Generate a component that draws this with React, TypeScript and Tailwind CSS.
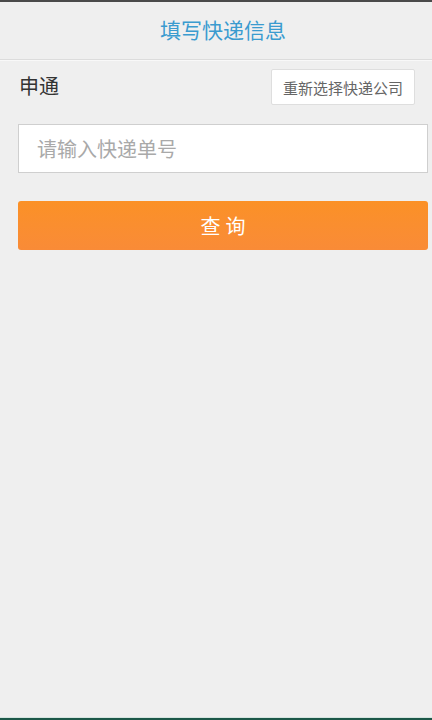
const FONT = { fontFamily: '"Noto Sans CJK SC", "Noto Sans", sans-serif' };

export default function App() {
  return (
    <div className="flex flex-col w-[432px] h-[720px] bg-[#efefef] text-[#333]" style={FONT}>
      <div className="h-[2px] bg-[#4a4a4a]" />
      {/* 顶部标题 */}
      <div className="flex items-center justify-center h-[58px] pl-[14px] pb-[3px] border-b border-[#dcdcdc]">
        <h1 className="text-[21px] text-[#3a9bcf] leading-none">填写快递信息</h1>
      </div>
      <div className="h-px bg-[#f8f8f8]" />

      <div className="flex flex-col pl-[18px] pr-[4px] flex-1">
        <div className="flex items-center justify-between mt-[8px] h-[36px]">
          <span className="text-[20px] leading-none pl-px pb-[3px]">申通</span>
          <button className="h-[36px] px-[11px] mr-[13px] bg-white border border-[#dedede] rounded-[2px] text-[15px] text-[#666] leading-none">
            重新选择快递公司
          </button>
        </div>

        <input
          className="mt-[19px] h-[49px] w-full bg-white border border-[#cfcfcf] px-[18px] text-[20px] placeholder:text-[#a9a9a9] outline-none"
          placeholder="请输入快递单号"
        />

        <button className="mt-[28px] h-[49px] w-full rounded-[3px] bg-gradient-to-b from-[#fb9126] to-[#f98b37] text-white text-[20px] tracking-[0.25em] pl-[0.25em] leading-none">
          查询
        </button>
      </div>

      <div className="h-px bg-[#d6e4e0]" />
      <div className="h-[2px] bg-[#1c5748]" />
    </div>
  );
}
